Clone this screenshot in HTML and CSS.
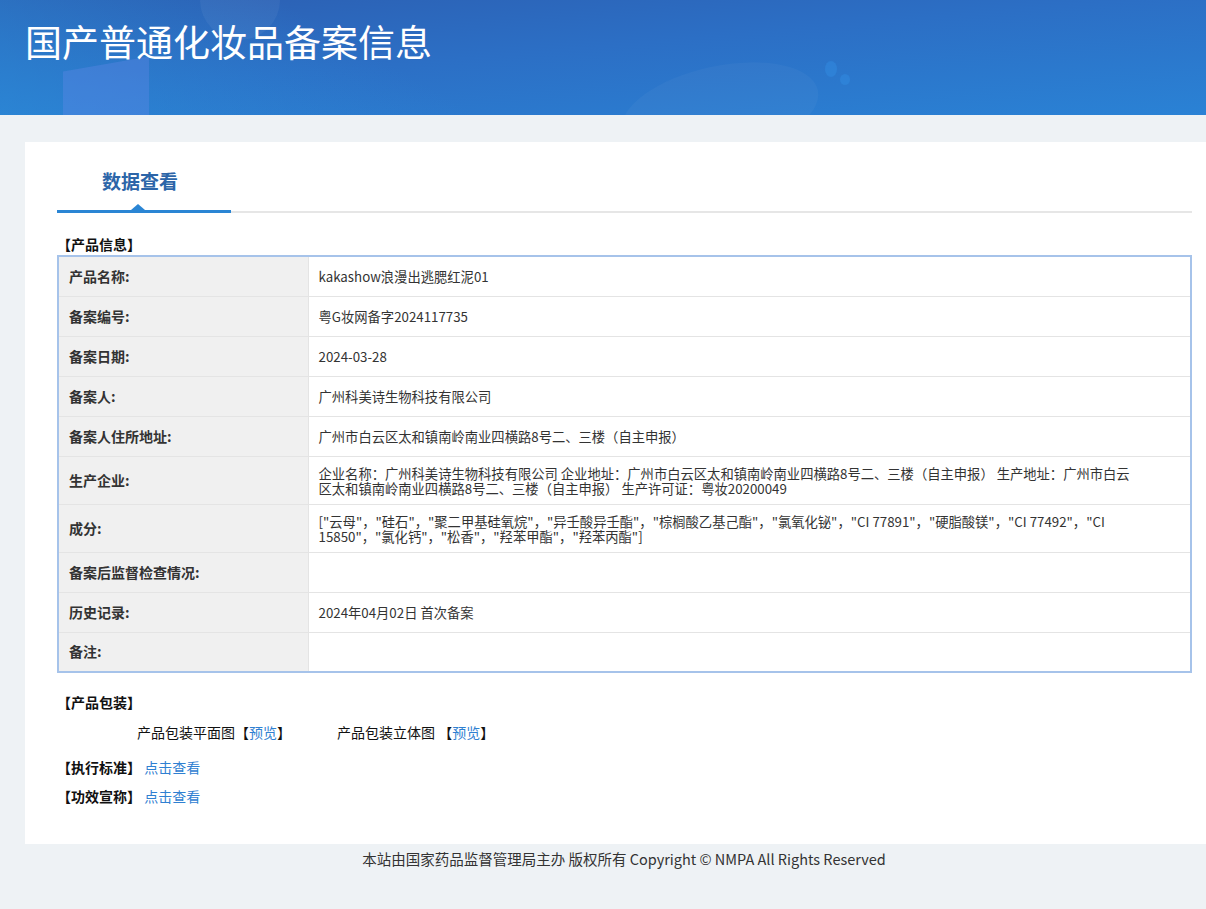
FILE: index.html
```html
<!DOCTYPE html>
<html>
<head>
  <meta charset="utf-8">
  <title>国产普通化妆品备案信息</title>
  <link rel="stylesheet" href="styles.css">
</head>
<body>
  <div class="header">
    <span class="deco deco-block"></span>
    <span class="deco deco-ring"></span>
    <span class="deco deco-blob"></span>
    <span class="deco deco-dot1"></span>
    <span class="deco deco-dot2"></span>
    <h1>国产普通化妆品备案信息</h1>
  </div>

  <div class="card">
    <div class="tabs">
      <div class="tab">数据查看</div>
    </div>

    <div class="section-title">【产品信息】</div>
    <table class="info-table">
      <tr><td class="label">产品名称:</td><td class="value">kakashow浪漫出逃腮红泥01</td></tr>
      <tr><td class="label">备案编号:</td><td class="value">粤G妆网备字2024117735</td></tr>
      <tr><td class="label">备案日期:</td><td class="value">2024-03-28</td></tr>
      <tr><td class="label">备案人:</td><td class="value">广州科美诗生物科技有限公司</td></tr>
      <tr><td class="label">备案人住所地址:</td><td class="value">广州市白云区太和镇南岭南业四横路8号二、三楼（自主申报）</td></tr>
      <tr><td class="label">生产企业:</td><td class="value multi">企业名称：广州科美诗生物科技有限公司 企业地址：广州市白云区太和镇南岭南业四横路8号二、三楼（自主申报） 生产地址：广州市白云区太和镇南岭南业四横路8号二、三楼（自主申报） 生产许可证：粤妆20200049</td></tr>
      <tr><td class="label">成分:</td><td class="value multi">["云母"，"硅石"，"聚二甲基硅氧烷"，"异壬酸异壬酯"，"棕榈酸乙基己酯"，"氯氧化铋"，"CI 77891"，"硬脂酸镁"，"CI 77492"，"CI 15850"，"氯化钙"，"松香"，"羟苯甲酯"，"羟苯丙酯"]</td></tr>
      <tr><td class="label">备案后监督检查情况:</td><td class="value"></td></tr>
      <tr><td class="label">历史记录:</td><td class="value">2024年04月02日 首次备案</td></tr>
      <tr><td class="label">备注:</td><td class="value"></td></tr>
    </table>

    <div class="section-title pack-title">【产品包装】</div>
    <div class="pack-row">
      <span class="pack-item">产品包装平面图【<a href="#">预览</a>】</span>
      <span class="pack-item">产品包装立体图 【<a href="#">预览</a>】</span>
    </div>

    <div class="section-title link-line first">【执行标准】 <a href="#">点击查看</a></div>
    <div class="section-title link-line">【功效宣称】 <a href="#">点击查看</a></div>
  </div>

  <div class="footer">本站由国家药品监督管理局主办 版权所有 Copyright © NMPA All Rights Reserved</div>
</body>
</html>
```

FILE: styles.css
```css
body {
  margin: 0;
  padding: 0;
  background-color: #eef2f5;
  font-family: "Noto Sans CJK SC", "Open Sans", sans-serif;
  font-size: 14px;
  color: #333;
}

a {
  color: #2f80d1;
  text-decoration: none;
}

/* top banner */
.header {
  position: relative;
  height: 115px;
  overflow: hidden;
  background: linear-gradient(175deg, #2c5fb2 0%, #2c6fc5 45%, #2a82d5 100%);
}

.header::before {
  content: "";
  position: absolute;
  left: 0;
  top: 0;
  width: 600px;
  height: 115px;
  background: linear-gradient(30deg, rgba(42, 145, 220, 0.6) 0%, rgba(42, 145, 220, 0) 60%);
}

.header h1 {
  position: relative;
  margin: 0;
  padding: 15px 0 0 25px;
  font-size: 37px;
  font-weight: normal;
  line-height: 52px;
  color: #fff;
}

.deco {
  position: absolute;
  display: block;
}

.deco-block {
  left: 63px;
  top: 64px;
  width: 86px;
  height: 60px;
  background: rgba(110, 140, 240, 0.3);
  transform: skewY(-10deg);
}

.deco-ring {
  left: 200px;
  top: -40px;
  width: 80px;
  height: 80px;
  border-radius: 50%;
  background: rgba(255, 255, 255, 0.05);
}

.deco-blob {
  left: 620px;
  top: 66px;
  width: 200px;
  height: 90px;
  border-radius: 50%;
  background: rgba(255, 255, 255, 0.035);
  transform: rotate(-12deg);
}

.deco-dot1 {
  left: 825px;
  top: 61px;
  width: 12px;
  height: 16px;
  border-radius: 50%;
  background: rgba(50, 140, 225, 0.5);
}

.deco-dot2 {
  left: 840px;
  top: 74px;
  width: 10px;
  height: 11px;
  border-radius: 50%;
  background: rgba(50, 140, 225, 0.5);
}

/* main white panel */
.card {
  margin: 27px 0 0 25px;
  padding: 0 14px 38px 32px;
  background-color: #fff;
}

.tabs {
  padding-top: 26px;
  border-bottom: 2px solid #e6e6e6;
}

.tab {
  position: relative;
  width: 166px;
  padding: 0 8px 16px 0;
  margin-bottom: -2px;
  border-bottom: 3px solid #2a85d4;
  text-align: center;
  font-size: 19px;
  font-weight: bold;
  line-height: 26px;
  color: #2c65a8;
}

.tab::after {
  content: "";
  position: absolute;
  left: 74px;
  bottom: 0;
  border-left: 7px solid transparent;
  border-right: 7px solid transparent;
  border-bottom: 6px solid #2a85d4;
}

.section-title {
  margin-top: 21px;
  font-weight: bold;
  color: #111;
  line-height: 20px;
}

/* product info table */
.info-table {
  width: 100%;
  margin-top: 1px;
  border-collapse: collapse;
  border: 2px solid #a6c3ea;
}

.info-table td {
  height: 40px;
  box-sizing: border-box;
  padding: 8px 10px;
  border-top: 1px solid #e4e4e4;
  line-height: 15px;
  vertical-align: middle;
}

.info-table td.label {
  width: 250px;
  font-weight: bold;
  background-color: #f0f0f0;
  border-right: 1px solid #e4e4e4;
}

.info-table td.value {
  padding-right: 50px;
  font-size: 13.3px;
}

.info-table td.multi {
  padding-top: 9px;
  padding-bottom: 8px;
}

.pack-title {
  margin-top: 19px;
}

.pack-row {
  display: flex;
  margin-top: 10px;
  padding-left: 80px;
  line-height: 20px;
  color: #111;
}

.pack-item {
  width: 200px;
}

.link-line {
  margin-top: 9px;
}

.link-line.first {
  margin-top: 15px;
}

.link-line a {
  font-weight: normal;
}

.footer {
  padding: 5px 0 0 42px;
  height: 59px;
  text-align: center;
  font-size: 14.5px;
  line-height: 20px;
  color: #333;
}
```
